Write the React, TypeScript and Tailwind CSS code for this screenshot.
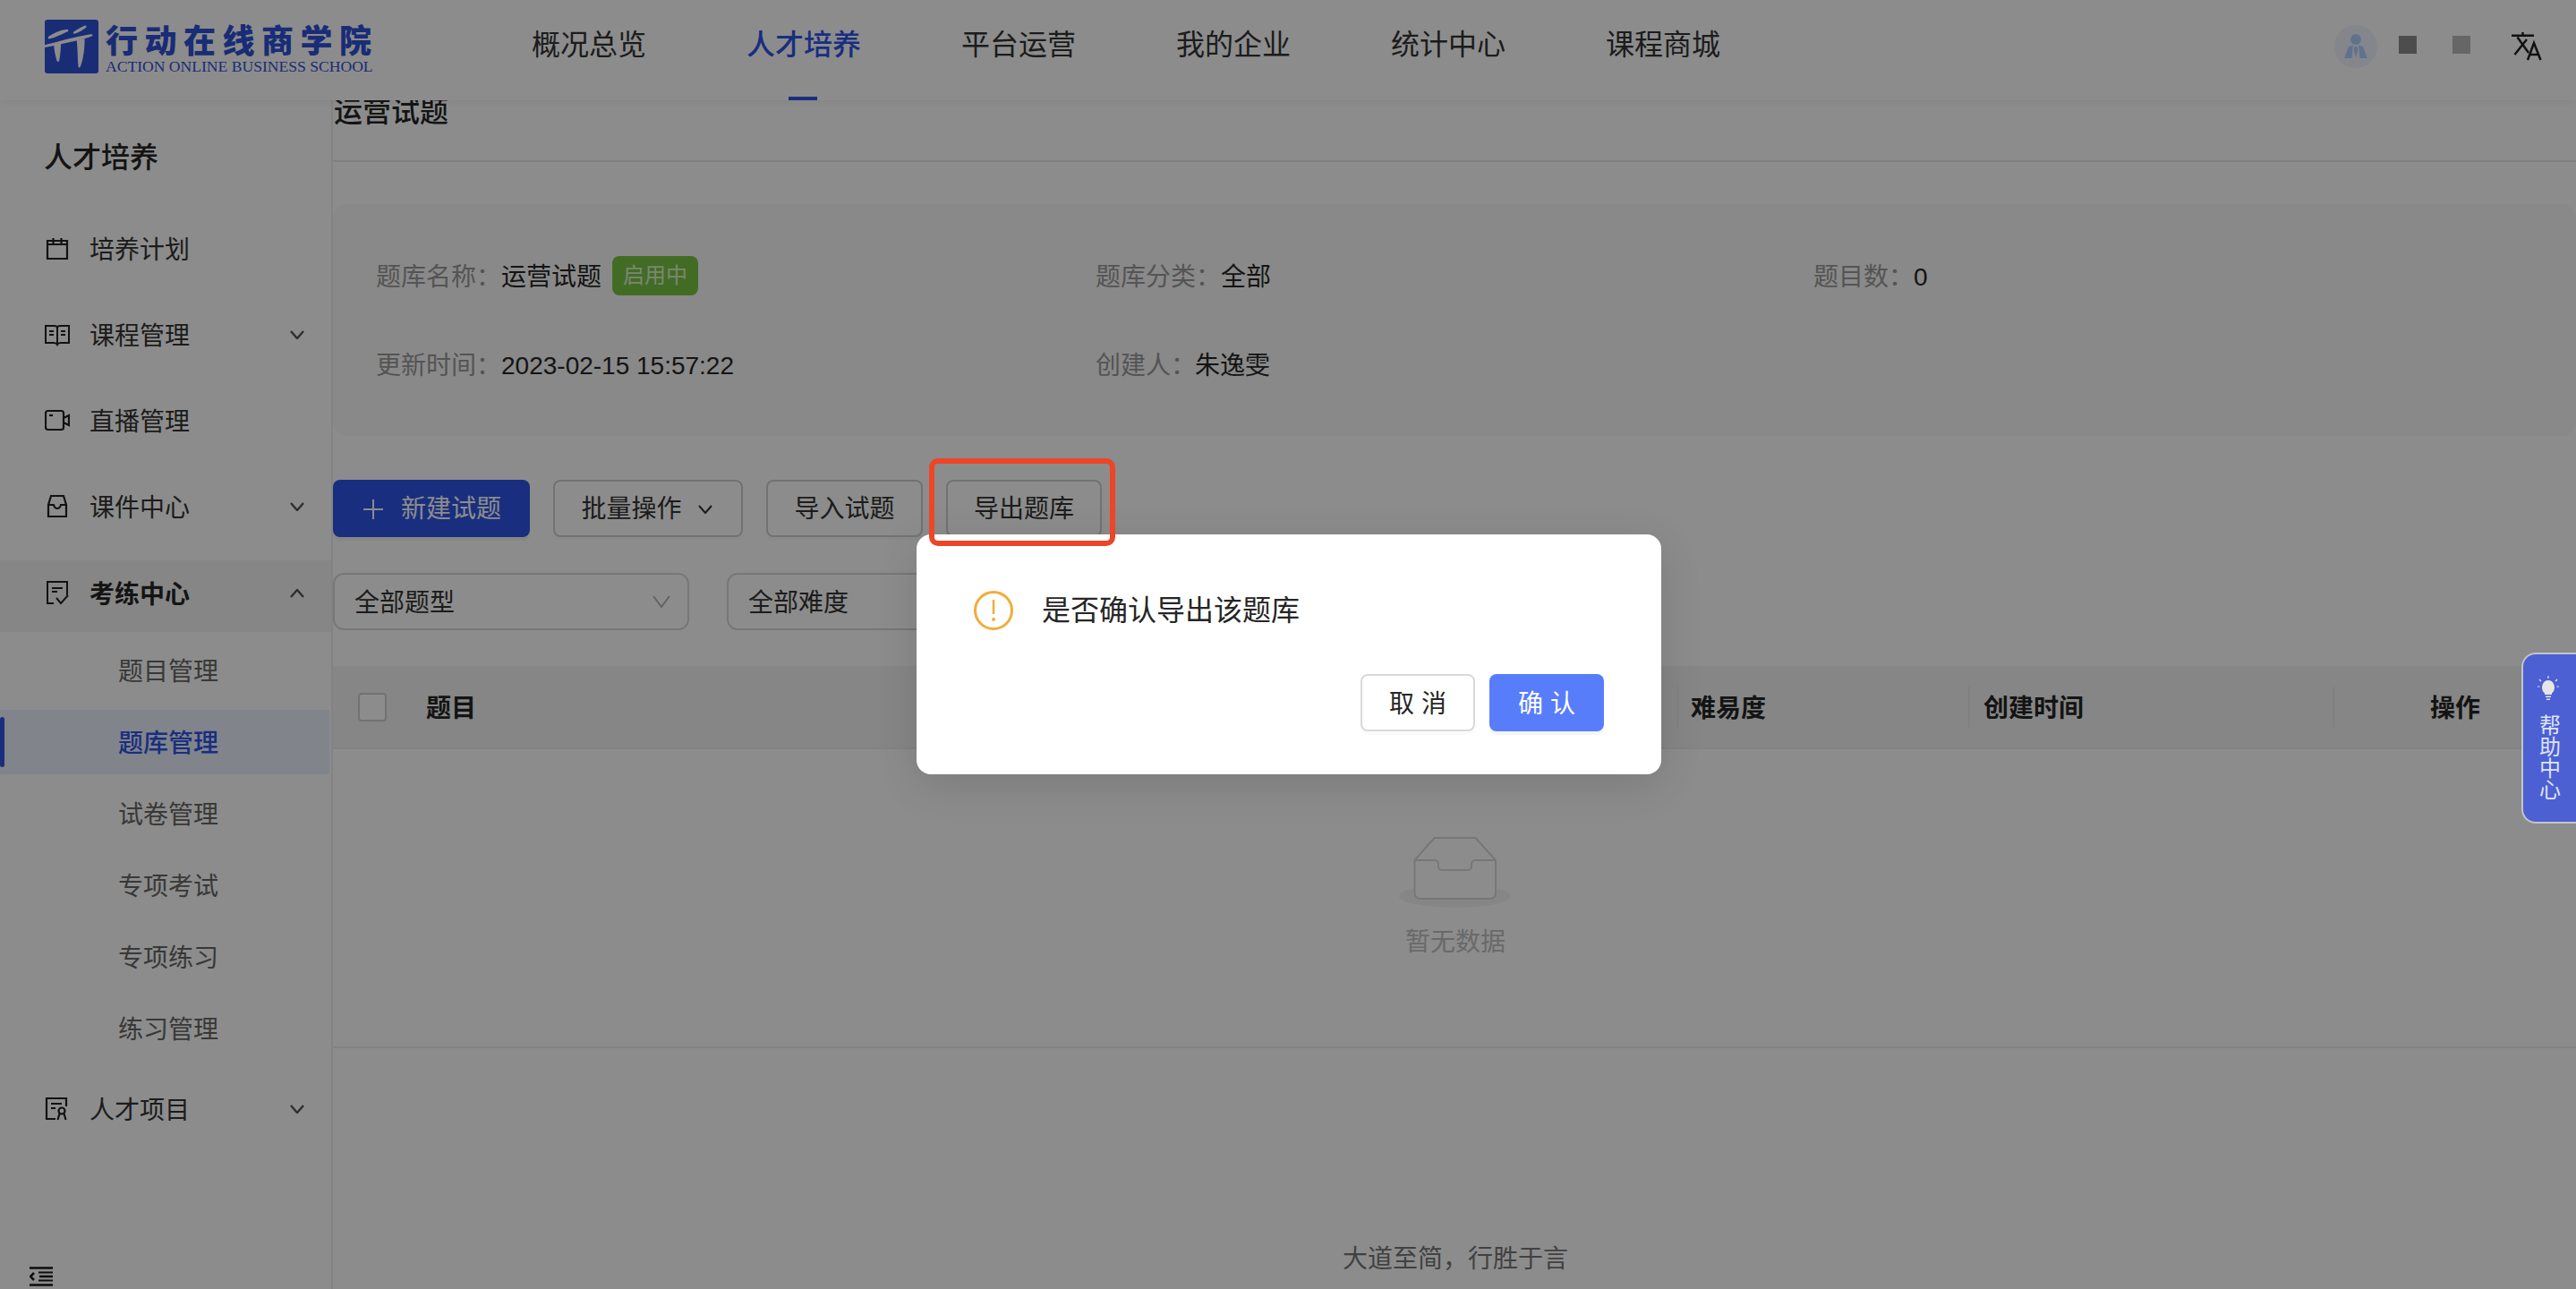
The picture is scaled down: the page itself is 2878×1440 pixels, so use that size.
const font = "font-['Liberation_Sans','Noto_Sans_CJK_SC',sans-serif]";

const navItems = ["概况总览", "人才培养", "平台运营", "我的企业", "统计中心", "课程商城"];

function Chevron({ up = false }: { up?: boolean }) {
  return (
    <svg width="16" height="10" viewBox="0 0 16 10" fill="none" className="ml-auto mr-[30px]">
      <path d={up ? "M1 9l7-8 7 8" : "M1 1l7 8 7-8"} stroke="#555" strokeWidth="2.4" />
    </svg>
  );
}

function CalendarIcon() {
  return (
    <svg width="28" height="28" viewBox="0 0 28 28" fill="none" stroke="#222" strokeWidth="2.2">
      <path d="M3 5h22v20H3zM3 9h22" />
      <path d="M9.500 2v6M18.500 2v6" />
    </svg>
  );
}

function BookIcon() {
  return (
    <svg width="28" height="28" viewBox="0 0 28 28" fill="none" stroke="#222" strokeWidth="2">
      <path d="M1 4h9q4 0 4 2 0-2 4-2h9v19h-9q-3 0-4 2-1-2-4-2H1zM14 6v18" />
      <path d="M5 10h5M5 14h5M18 10h5M18 14h5" />
    </svg>
  );
}

function VideoIcon() {
  return (
    <svg width="28" height="28" viewBox="0 0 28 28" fill="none" stroke="#222" strokeWidth="2.2">
      <rect x="1" y="3" width="20" height="21" rx="2.500" />
      <path d="M21 11l6-3v11l-6-3" />
      <path d="M5 8h4" />
    </svg>
  );
}

function InboxIcon() {
  return (
    <svg width="28" height="28" viewBox="0 0 28 28" fill="none" stroke="#222" strokeWidth="2.2">
      <path d="M7 2h14l3 10v13H4V12z" />
      <path d="M4 12h6q1 4 4 4t4-4h6" />
    </svg>
  );
}

function ExamIcon() {
  return (
    <svg width="28" height="28" viewBox="0 0 28 28" fill="none" stroke="#222" strokeWidth="2">
      <path d="M10 25H3V1h22v15" />
      <path d="M8 8h12M8 12h6" />
      <path d="M13 19l5 6 8-9" />
    </svg>
  );
}

function TalentIcon() {
  return (
    <svg width="28" height="28" viewBox="0 0 28 28" fill="none" stroke="#222" strokeWidth="2.2">
      <path d="M12 25H2V2h22v9" />
      <path d="M7 8h12M7 13h5" />
      <circle cx="19" cy="16" r="3.500" />
      <path d="M16.500 19l-2 7M21.500 19l2 7" />
    </svg>
  );
}

function LogoMark() {
  return (
    <svg width="60" height="60" viewBox="22 22 178 178" className="rounded-[3px] shrink-0">
      <rect x="22" y="22" width="178" height="178" fill="#2f50d8" />
      <g fill="#fff">
        <path d="M34 78c16-10 38-22 62-24 5 0 6 4 2 7-18 8-42 20-60 24-5 1-7-4-4-7z" />
        <path d="M22 106c45-12 100-28 152-36 7-1 9 4 4 7-18 7-40 12-62 17-32 7-62 15-94 20z" />
        <path d="M118 62c10-6 22-14 36-20 5-2 8 2 5 6-10 8-24 16-36 20-6 2-9-3-5-6z" />
        <path d="M52 104l24-6c-1 20-2 42-6 60-2 5-6 5-8 0-5-18-9-36-10-54z" />
        <path d="M128 90l26-6c1 32-4 68-14 94-2 5-6 4-7-1-2-28-2-58-5-87z" />
      </g>
    </svg>
  );
}

function Header() {
  return (
    <header className="relative z-10 flex h-[112px] shrink-0 items-center bg-white shadow-[0_2px_8px_rgba(0,0,0,0.06)]">
      <div className="flex items-center pl-[50px] w-[594px] shrink-0 pb-[8px]">
        <LogoMark />
        <div className="ml-[8px] flex flex-col text-[#2f50d8] whitespace-nowrap">
          <span className="font-['Noto_Sans_CJK_SC',sans-serif] text-[36px] leading-[42px] font-black tracking-[7.500px]">
            行动在线商学院
          </span>
          <span className="mt-[1px] font-['Liberation_Serif',serif] text-[17.600px] leading-[18px]">
            ACTION ONLINE BUSINESS SCHOOL
          </span>
        </div>
      </div>
      <nav className="flex h-full gap-[112px]">
        {navItems.map((item) => (
          <div key={item} className="relative flex w-[128px] items-center justify-center pb-[12px]">
            <span className={`text-[32px] whitespace-nowrap ${item === "人才培养" ? "font-medium text-[#2f55e8]" : "text-[#333]"}`}>
              {item}
            </span>
            {item === "人才培养" && <div className="absolute bottom-0 left-[47px] h-[4px] w-[32px] bg-[#2f55e8]" />}
          </div>
        ))}
      </nav>
      <div className="ml-auto flex items-center pb-[8px]">
        <div className="flex h-[48px] w-[48px] items-center justify-center rounded-full bg-[#f0f5ff]">
          <svg width="28" height="28" viewBox="0 0 28 28" fill="#b0d0ff">
            <circle cx="14" cy="6" r="6" />
            <path d="M6 14l5-1.500L9.500 27H1zM22 14l-5-1.500L18.500 27H27zM12.500 14h3l.8 4-2.300 8-2.300-8z" />
          </svg>
        </div>
        <div className="mb-[4px] ml-[24px] h-[20px] w-[20px] bg-[#8c8c8c]" />
        <div className="mb-[4px] ml-[40px] h-[20px] w-[20px] bg-[#bababa]" />
        <svg width="34" height="32" viewBox="0 0 34 32" fill="none" stroke="#1f1f1f" strokeWidth="2.500" className="ml-[46px] mr-[38px]">
          <path d="M0 3.800h25M12.500 0v4M6.500 5.500L19 23M17 8L3.500 25" />
          <path d="M18 31l7-19 7.500 19M20.500 25h10" />
        </svg>
      </div>
    </header>
  );
}

function MenuRow({ label, icon, chevron, up, active, className = "" }: { label: string; icon: React.ReactNode; chevron?: boolean; up?: boolean; active?: boolean; className?: string }) {
  return (
    <div className={`flex h-[80px] items-center pl-[50px] ${active ? "bg-[#f5f5f5] pb-[6px]" : ""} ${className}`}>
      {icon}
      <span className={`ml-[22px] pt-[4px] text-[28px] ${active ? "font-bold text-[#262626]" : "text-[#333]"}`}>{label}</span>
      {chevron && <Chevron up={up} />}
    </div>
  );
}

function Sidebar() {
  const subItems = ["题目管理", "题库管理", "试卷管理", "专项考试", "专项练习", "练习管理"];
  return (
    <aside className="relative flex w-[372px] shrink-0 flex-col border-r-2 border-[#eeeeee] bg-white">
      <div className="mt-[42px] h-[44px] pl-[49px] text-[32px] leading-[44px] font-medium text-[#262626]">人才培养</div>
      <div className="mt-[40px] flex flex-col">
        <MenuRow label="培养计划" icon={<CalendarIcon />} />
        <MenuRow label="课程管理" icon={<BookIcon />} chevron className="mt-[16px]" />
        <MenuRow label="直播管理" icon={<VideoIcon />} className="mt-[16px]" />
        <MenuRow label="课件中心" icon={<InboxIcon />} chevron className="mt-[16px]" />
        <MenuRow label="考练中心" icon={<ExamIcon />} chevron up active className="mt-[20px]" />
        <div className="mt-[7px] flex flex-col gap-[8px]">
          {subItems.map((item) => (
            <div
              key={item}
              className={`relative mr-[2px] flex h-[72px] items-center pl-[132px] pt-[4px] text-[28px] ${item === "题库管理" ? "bg-[#ecf0fe] font-medium text-[#2f55e8]" : "text-[#666]"}`}
            >
              {item === "题库管理" && <div className="absolute left-0 top-[8px] h-[56px] w-[5px] rounded-full bg-[#2f55e8]" />}
              {item}
            </div>
          ))}
        </div>
        <MenuRow label="人才项目" icon={<TalentIcon />} chevron className="mt-[14px]" />
      </div>
      <svg width="26" height="22" viewBox="0 0 26 22" fill="none" stroke="#1a1a1a" strokeWidth="2.500" className="absolute bottom-[3px] left-[33px]">
        <path d="M0 1.500h26M11 11h15M0 20.500h26M5 7L1 11l4 4" />
        <path d="M10 6.500h16M10 15.500h16" strokeWidth="2" />
      </svg>
    </aside>
  );
}

function OutlineButton({ children, className = "" }: { children: React.ReactNode; className?: string }) {
  return (
    <div className={`flex h-[64px] items-center justify-center rounded-[8px] border-2 border-[#d0d0d0] bg-white pt-[1px] text-[28px] text-[#333] shadow-[0_4px_0_rgba(0,0,0,0.015)] ${className}`}>
      {children}
    </div>
  );
}

function Select({ label }: { label: string }) {
  return (
    <div className="flex h-[64px] w-[398px] items-center rounded-[12px] border-2 border-[#d9d9d9] bg-white pl-[22px] pr-[19px] text-[28px] text-[#333]">
      <span className="pt-[3px]">{label}</span>
      <svg width="20" height="14" viewBox="0 0 20 14" fill="none" className="ml-auto">
        <path d="M1 1l9 12 9-12" stroke="#b5b5b5" strokeWidth="2" />
      </svg>
    </div>
  );
}

function InfoField({ label, value, className = "" }: { label: string; value: string; className?: string }) {
  return (
    <>
      <span className="pt-[4px] text-[#999]">{label}</span>
      <span className={`pt-[4px] text-[#262626] ${className}`}>{value}</span>
    </>
  );
}

function Main() {
  return (
    <main className="flex min-w-0 flex-1 flex-col bg-white">
      <div className="h-[69px] shrink-0 border-b-2 border-[#e8e8e8] pl-[1px]">
        <div className="-mt-[3px] text-[32px] leading-[32px] font-medium text-[#262626]">运营试题</div>
      </div>
      <section className="mt-[47px] h-[259px] rounded-[16px] bg-[#f9f9f9] pl-[48px] pt-[58px] text-[28px]">
        <div className="grid grid-cols-[804px_802px_1fr] gap-y-[55px]">
          <div className="flex h-[44px] items-center">
            <InfoField label="题库名称：" value="运营试题" />
            <span className="ml-[12px] flex h-[44px] w-[96px] items-center justify-center rounded-[8px] bg-[#78c543] text-[24px] text-[#e0f5d0]">启用中</span>
          </div>
          <div className="flex h-[44px] items-center">
            <InfoField label="题库分类：" value="全部" />
          </div>
          <div className="flex h-[44px] items-center">
            <InfoField label="题目数：" value="0" />
          </div>
          <div className="flex h-[44px] items-center">
            <InfoField label="更新时间：" value="2023-02-15 15:57:22" />
          </div>
          <div className="flex h-[44px] items-center">
            <InfoField label="创建人：" value="朱逸雯" className="ml-[-1px]" />
          </div>
        </div>
      </section>
      <div className="mt-[49px] flex gap-[26px]">
        <div className="flex h-[64px] w-[220px] items-center justify-center gap-[20px] rounded-[8px] bg-[#2f55e8] pl-[2px] pt-[1px] text-[28px] text-white shadow-[0_4px_0_rgba(0,0,0,0.045)]">
          <svg width="22" height="22" viewBox="0 0 22 22" stroke="#fff" strokeWidth="2">
            <path d="M0 11h22M11 0v22" />
          </svg>
          新建试题
        </div>
        <OutlineButton className="w-[212px] gap-[18px] pr-[3px]">
          批量操作
          <svg width="16" height="10" viewBox="0 0 16 10" fill="none">
            <path d="M1 1l7 8 7-8" stroke="#333" strokeWidth="2" />
          </svg>
        </OutlineButton>
        <OutlineButton className="w-[175px]">导入试题</OutlineButton>
        <OutlineButton className="w-[174px]">导出题库</OutlineButton>
      </div>
      <div className="mt-[40px] flex gap-[42px]">
        <Select label="全部题型" />
        <Select label="全部难度" />
      </div>
      <div className="mt-[40px] flex h-[93px] items-center border-b-2 border-[#eeeeee] bg-[#f5f5f5] text-[28px] font-bold text-[#262626]">
        <div className="ml-[28px] h-[32px] w-[32px] rounded-[4px] border-2 border-[#d0d0d0] bg-white" />
        <div className="ml-[44px] flex-1 pt-[4px]">题目</div>
        <div className="flex h-[46px] w-[326px] items-center border-l-2 border-[#eaeaea] pl-[14px] pt-[4px]">难易度</div>
        <div className="flex h-[46px] w-[407px] items-center border-l-2 border-[#eaeaea] pl-[15px] pt-[4px]">创建时间</div>
        <div className="flex h-[46px] w-[272px] items-center justify-end border-l-2 border-[#eaeaea] pr-[107px] pt-[4px]">操作</div>
      </div>
      <div className="flex h-[334px] flex-col items-center border-b-2 border-[#eeeeee] pt-[98px]">
        <svg width="125" height="79" viewBox="0 0 125 79" fill="none">
          <ellipse cx="62.500" cy="66" rx="62.500" ry="13" fill="#f5f5f5" />
          <path d="M17.500 26L39.500 1h46L108 26v37a6 6 0 0 1-6 6H23.500a6 6 0 0 1-6-6z" fill="#fff" stroke="#d9d9d9" strokeWidth="2" />
          <path d="M17.500 26H40a4 4 0 0 1 4 4v3a4 4 0 0 0 4 4h29a4 4 0 0 0 4-4v-3a4 4 0 0 1 4-4h23" stroke="#d9d9d9" strokeWidth="2" />
        </svg>
        <div className="mt-[19px] pl-[2px] text-[28px] leading-[40px] text-[#bfbfbf]">暂无数据</div>
      </div>
      <div className="mt-[216px] pl-[2px] text-center text-[28px] leading-[40px] text-[#777]">大道至简，行胜于言</div>
    </main>
  );
}

function ConfirmDialog() {
  return (
    <div className="absolute inset-0 z-20 flex justify-center bg-black/45 pl-[2px] pt-[597px]">
      <div className="flex h-[268px] w-[832px] flex-col rounded-[16px] bg-white pl-[64px] pr-[64px] pt-[63px] shadow-[0_12px_48px_rgba(0,0,0,0.12)]">
        <div className="flex h-[44px] items-center gap-[32px]">
          <svg width="44" height="44" viewBox="0 0 44 44" fill="none">
            <circle cx="22" cy="22" r="20.500" stroke="#f2ac3d" strokeWidth="3" />
            <path d="M22 10v16" stroke="#f2ac3d" strokeWidth="2.500" />
            <circle cx="22" cy="32" r="2" fill="#f2ac3d" />
          </svg>
          <span className="text-[32px] text-[#262626]">是否确认导出该题库</span>
        </div>
        <div className="mt-[49px] flex justify-end gap-[16px]">
          <div className="flex h-[64px] w-[128px] items-center justify-center rounded-[8px] border-2 border-[#d9d9d9] bg-white pt-[4px] text-[28px] text-[#262626] shadow-[0_4px_0_rgba(0,0,0,0.015)]">
            取 消
          </div>
          <div className="flex h-[64px] w-[128px] items-center justify-center rounded-[8px] bg-[#587dfa] pt-[4px] text-[28px] text-white shadow-[0_4px_0_rgba(0,0,0,0.045)]">
            确 认
          </div>
        </div>
      </div>
    </div>
  );
}

function HelpTab() {
  return (
    <div className="absolute right-0 top-[729px] z-30 flex h-[191px] w-[61px] flex-col items-center rounded-l-[16px] border-2 border-r-0 border-[#c4c4c4] bg-[#4c60d4] pr-[4px] pt-[24px]">
      <svg width="24" height="28" viewBox="0 0 24 28" fill="#e6e6e6">
        <path d="M12 5a7 8 0 0 1 4 14.500V21H8v-1.500A7 8 0 0 1 12 5zM9 22.500h6V24H9zM10 25.500h4V27h-4z" />
        <path d="M12 0v3M2 4l2 2M22 4l-2 2M0 12h2.500M24 12h-2.500" stroke="#e6e6e6" strokeWidth="1.200" />
      </svg>
      <div className="mt-[15px] text-[24px] leading-[24px] text-[#dfe3f7] [writing-mode:vertical-rl]">帮助中心</div>
    </div>
  );
}

export default function App() {
  return (
    <div className={`relative flex h-[1440px] w-[2878px] flex-col overflow-hidden bg-white ${font}`}>
      <Header />
      <div className="flex min-h-0 flex-1">
        <Sidebar />
        <Main />
      </div>
      <ConfirmDialog />
      <div className="absolute left-[1038px] top-[512px] z-30 h-[98px] w-[208px] rounded-[10px] border-[6px] border-[#ee4527]" />
      <HelpTab />
    </div>
  );
}
